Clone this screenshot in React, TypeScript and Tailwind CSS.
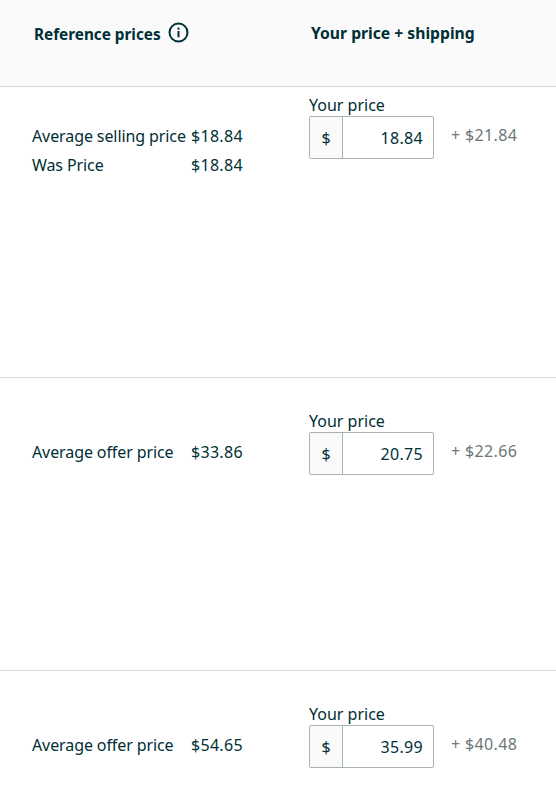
interface PriceRow {
  id: string;
  refs: { label: string; value: string }[];
  price: string;
  total: string;
  height: string;
  top: string;
  refTop: string;
}

const rows: PriceRow[] = [
  {
    id: 'a',
    refs: [
      { label: 'Average selling price', value: '$18.84' },
      { label: 'Was Price', value: '$18.84' },
    ],
    price: '18.84',
    total: '+ $21.84',
    height: 'h-[291px]',
    top: 'pt-[8px]',
    refTop: 'pt-[38px]',
  },
  {
    id: 'b',
    refs: [{ label: 'Average offer price', value: '$33.86' }],
    price: '20.75',
    total: '+ $22.66',
    height: 'h-[293px]',
    top: 'pt-[33px]',
    refTop: 'pt-[63px]',
  },
  {
    id: 'c',
    refs: [{ label: 'Average offer price', value: '$54.65' }],
    price: '35.99',
    total: '+ $40.48',
    height: 'h-[125px]',
    top: 'pt-[33px]',
    refTop: 'pt-[63px]',
  },
];

function InfoIcon() {
  return (
    <svg width="21" height="21" viewBox="0 0 21 21" fill="none" className="ml-[7px] -mt-[3px]">
      <circle cx="10.5" cy="10.5" r="9" stroke="#002f36" strokeWidth="2" />
      <rect x="9.5" y="9" width="2" height="6.2" fill="#002f36" />
      <rect x="9.5" y="5.6" width="2" height="2" fill="#002f36" />
    </svg>
  );
}

export default function App() {
  return (
    <div className="w-[556px] bg-white text-[#002f36] text-[16px] font-['Noto_Sans',sans-serif]">
      {/* Column headers */}
      <div className="h-[87px] bg-[#fafafa] border-b border-[#d5dbdb] flex pt-[22px] font-bold leading-[22px]">
        <div className="w-[311px] pl-[34px] pt-[1px] flex items-center self-start text-[15.3px]">
          Reference prices
          <InfoIcon />
        </div>
        <div className="text-[15.7px]">Your price + shipping</div>
      </div>

      {rows.map((row) => (
        <div key={row.id} className={`${row.height} border-b border-[#d5dbdb] last:border-b-0 flex`}>
          <div className={`w-[309px] pl-[32px] ${row.refTop} flex flex-col gap-[7px]`}>
            {row.refs.map((r) => (
              <div key={r.label} className="flex leading-[22px]">
                <span className="w-[159px] tracking-[-0.1px]">{r.label}</span>
                <span className="tracking-[0.3px]">{r.value}</span>
              </div>
            ))}
          </div>
          <div className={row.top}>
            <div className="leading-[21px]">Your price</div>
            <div className="flex items-start">
              <div className="w-[125px] h-[43px] flex border border-[#a6b2b5] rounded-[2px] bg-white">
                <div className="w-[33px] bg-[#fafafa] border-r border-[#a6b2b5] flex items-center justify-center">$</div>
                <div className="flex-1 flex items-center justify-end pr-[10px] tracking-[0.3px]">{row.price}</div>
              </div>
              <div className="ml-[17px] mt-[8px] leading-[22px] text-[#6c7778] tracking-[0.35px]">{row.total}</div>
            </div>
          </div>
        </div>
      ))}
    </div>
  );
}
